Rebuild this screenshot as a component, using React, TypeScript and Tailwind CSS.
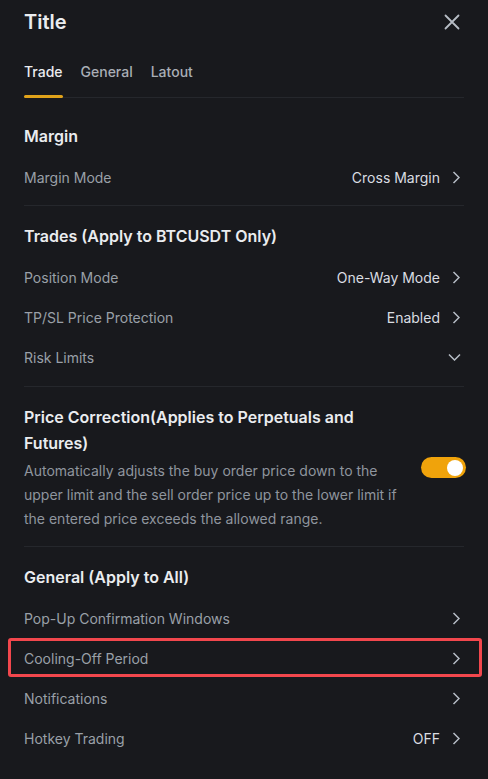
const FONT = "font-['Inter','Liberation_Sans',sans-serif]";

function Chevron() {
  return (
    <svg width="8" height="13" viewBox="0 0 8 13" className="ml-3 shrink-0 mr-1">
      <polyline points="1.5,1 7,6.5 1.5,12" fill="none" stroke="#b7bdc6" strokeWidth="1.5" />
    </svg>
  );
}

function ChevronDown() {
  return (
    <svg width="13" height="8" viewBox="0 0 13 8" className="shrink-0 mr-[3px]">
      <polyline points="1,1.5 6.5,7 12,1.5" fill="none" stroke="#b7bdc6" strokeWidth="1.5" />
    </svg>
  );
}

function Row({ label, value, down, boxed }: { label: string; value?: string; down?: boolean; boxed?: boolean }) {
  return (
    <div className="relative h-10 flex items-center">
      <span className="flex-1 text-[14px] text-[#9aa0a8]">{label}</span>
      {value && <span className="text-[14px] text-[#dadde2]">{value}</span>}
      {down ? <ChevronDown /> : <Chevron />}
      {boxed && (
        <div className="absolute top-0 bottom-px left-[-16px] right-[-18px] border-[3px] border-[#f2474d] rounded-[3px]" />
      )}
    </div>
  );
}

function Heading({ children }: { children: React.ReactNode }) {
  return <h2 className="h-6 leading-6 mb-[9px] text-[16px] font-semibold text-[#eaecef]">{children}</h2>;
}

export default function App() {
  return (
    <div className={`${FONT} w-[488px] h-[779px] bg-[#18191d] px-6 overflow-hidden`}>
      {/* Header */}
      <div className="h-11 flex items-center justify-between">
        <h1 className="text-[20px] font-semibold text-[#eaecef]">Title</h1>
        <svg width="16" height="16" viewBox="0 0 16 16" className="mr-[4px]">
          <path d="M1.5 1.5 14.5 14.5M14.5 1.5 1.5 14.5" stroke="#b7bdc6" strokeWidth="1.8" strokeLinecap="round" />
        </svg>
      </div>

      {/* Tabs */}
      <div className="flex gap-[18px] border-b border-[#25272c]">
        {["Trade", "General", "Latout"].map((t, i) => (
          <div key={t} className="relative h-[53px] pt-[18px] text-[14px] leading-5 font-medium">
            <span className={i === 0 ? "text-[#eaecef]" : "text-[#a9aeb6]"}>{t}</span>
            {i === 0 && <div className="absolute left-0 right-0 bottom-[-1px] h-[3px] bg-[#e0a21a] rounded-sm" />}
          </div>
        ))}
      </div>

      {/* Margin */}
      <div className="pt-[26px] pb-[8px] border-b border-[#25272c]">
        <Heading>Margin</Heading>
        <Row label="Margin Mode" value="Cross Margin" />
      </div>

      {/* Trades */}
      <div className="pt-[18px] pb-[9px] border-b border-[#25272c]">
        <Heading>Trades (Apply to BTCUSDT Only)</Heading>
        <Row label="Position Mode" value="One-Way Mode" />
        <Row label="TP/SL Price Protection" value="Enabled" />
        <Row label="Risk Limits" down />
      </div>

      {/* Price Correction */}
      <div className="pt-[17px] pb-[15px] border-b border-[#25272c]">
        <h2 className="max-w-[380px] text-[16px] leading-[26px] font-semibold text-[#eaecef]">
          Price Correction(Applies to Perpetuals and Futures)
        </h2>
        <div className="flex items-start gap-4 mt-[3px]">
          <p className="flex-1 text-[14px] leading-6 text-[#8f959e]">
            Automatically adjusts the buy order price down to the upper limit and the sell order price up to the lower
            limit if the entered price exceeds the allowed range.
          </p>
          <div className="shrink-0 w-[45px] h-[21px] rounded-full bg-[#f0a30b] flex items-center justify-end pr-[3px] mt-[-2px] mr-[-2px]">
            <div className="w-[16px] h-[16px] rounded-full bg-white" />
          </div>
        </div>
      </div>

      {/* General */}
      <div className="pt-[18px]">
        <Heading>General (Apply to All)</Heading>
        <Row label="Pop-Up Confirmation Windows" />
        <Row label="Cooling-Off Period" boxed />
        <Row label="Notifications" />
        <Row label="Hotkey Trading" value="OFF" />
      </div>
    </div>
  );
}
